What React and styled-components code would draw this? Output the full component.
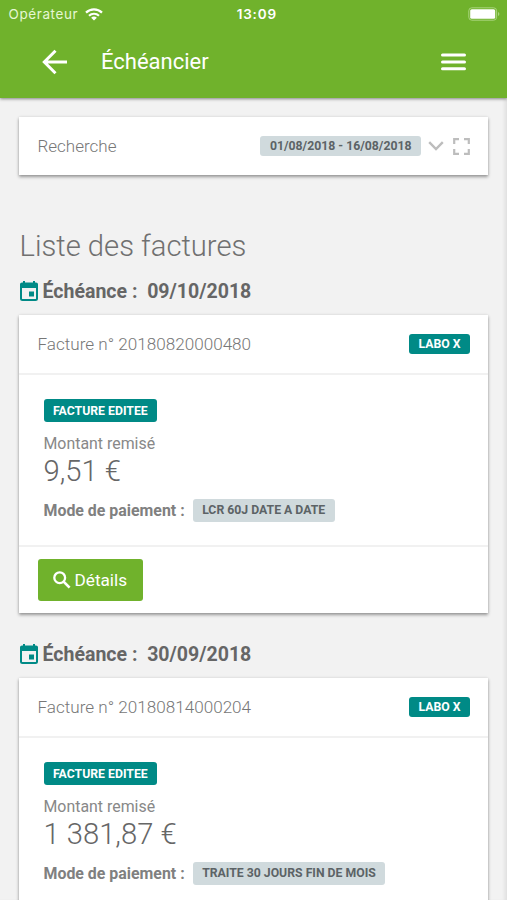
// App.jsx
import React from "react";
import styled, { createGlobalStyle } from "styled-components";

const GlobalStyle = createGlobalStyle`
  * {
    box-sizing: border-box;
  }

  body {
    margin: 0;
    background-color: #f2f2f2;
    font-family: Roboto, "Liberation Sans", sans-serif;
    color: #666;
  }
`;

const Screen = styled.div`
  height: 900px;
  overflow: hidden;
  display: flex;
  flex-direction: column;
  background-color: #f2f2f2;
`;

const Header = styled.header`
  height: 98px;
  flex-shrink: 0;
  z-index: 1;
  background-color: #70b22c;
  color: #fff;
  box-shadow: 0 1px 3px rgba(0, 0, 0, 0.45);
`;

const StatusBar = styled.div`
  height: 28px;
  padding: 0 7px 0 8.5px;
  display: grid;
  grid-template-columns: 1fr auto 1fr;
  align-items: center;
  font-family: Inter, sans-serif;
  font-size: 13.5px;
  line-height: 28px;
`;

const Carrier = styled.div`
  display: flex;
  align-items: center;
  gap: 7px;
  color: #e6f7d4;
  letter-spacing: 0.6px;
`;

const Clock = styled.div`
  padding-left: 5px;
  font-weight: 600;
  letter-spacing: 0.8px;
`;

const Battery = styled.svg`
  justify-self: end;
`;

const NavBar = styled.div`
  height: 68px;
  padding: 0 40px 0 42px;
  display: flex;
  align-items: center;
`;

const NavTitle = styled.h1`
  flex: 1;
  margin: 0 0 0 33px;
  font-size: 22px;
  font-weight: 400;
  line-height: 30px;
`;

const Content = styled.main`
  flex: 1;
  min-height: 0;
  padding: 19px 18px 0 19px;
  display: flex;
  flex-direction: column;
  border-right: 1px solid #e2e2e2;
  box-shadow: inset -3px 0 3px -1px rgba(0, 0, 0, 0.06);
`;

const Card = styled.section`
  flex-shrink: 0;
  background-color: #fff;
  box-shadow: 0 2px 3px rgba(0, 0, 0, 0.36), 0 0 3px rgba(0, 0, 0, 0.1);
`;

const SearchCard = styled(Card)`
  height: 58px;
  padding: 0 18px 0 18.5px;
  display: flex;
  align-items: center;
`;

const SearchLabel = styled.span`
  flex: 1;
  font-size: 17px;
  font-weight: 300;
  color: #777;
`;

const Badge = styled.span`
  height: ${(props) => props.$height || 23}px;
  padding: 0 9.5px;
  border-radius: 3px;
  display: inline-flex;
  align-items: center;
  background-color: ${(props) => (props.$teal ? "#008a86" : "#d0dadd")};
  color: ${(props) => (props.$teal ? "#fff" : "#5c6366")};
  font-size: 12.25px;
  font-weight: 700;
  white-space: nowrap;
`;

const SearchIcons = styled.div`
  margin-left: 7px;
  display: flex;
  align-items: center;
  gap: 9px;
`;

const ListTitle = styled.h2`
  margin: 51px 0 0 0.5px;
  font-size: 29.2px;
  font-weight: 300;
  line-height: 40px;
  color: #707070;
`;

const DueDate = styled.h3`
  height: 24px;
  flex-shrink: 0;
  margin: ${(props) => (props.$first ? 14 : 30)}px 0 11px;
  display: flex;
  align-items: center;
  font-size: 19.55px;
  font-weight: 700;
  line-height: 24px;
  white-space: pre;

  svg {
    margin: -2px 5px 0 0.5px;
  }
`;

const CardHeader = styled.div`
  height: 60px;
  padding: 0 18px 0 18.5px;
  border-bottom: 2px solid #f1f1f1;
  display: flex;
  align-items: center;
  justify-content: space-between;
  font-size: 17.1px;
  font-weight: 300;
  color: #777;
`;

const CardBody = styled.div`
  height: 170px;
  padding: 24px 24px 0 24.5px;
`;

const AmountLabel = styled.div`
  margin-top: 12px;
  font-size: 15.9px;
  line-height: 20px;
  color: #888;
`;

const Amount = styled.div`
  font-size: 29.2px;
  font-weight: 300;
  line-height: 34px;
  color: #666;
`;

const Payment = styled.div`
  height: 24px;
  margin-top: 10px;
  display: flex;
  align-items: center;
  gap: 8px;
  font-size: 15.9px;
  font-weight: 700;
  color: #808080;
`;

const CardFooter = styled.div`
  height: 68px;
  padding: 12px 18px 0 18.5px;
  border-top: 2px solid #f1f1f1;
`;

const DetailsButton = styled.button`
  width: 105px;
  height: 42px;
  padding: 0 0 1px 15px;
  border: none;
  border-radius: 3px;
  display: flex;
  align-items: center;
  gap: 4px;
  background-color: #70b22c;
  color: #fff;
  font-family: inherit;
  font-size: 17.2px;
`;

const invoices = [
  {
    due: "09/10/2018",
    number: "20180820000480",
    amount: "9,51 €",
    payment: "LCR 60J DATE A DATE",
    hasDetails: true,
  },
  {
    due: "30/09/2018",
    number: "20180814000204",
    amount: "1 381,87 €",
    payment: "TRAITE 30 JOURS FIN DE MOIS",
    hasDetails: false,
  },
];

const WifiIcon = () => (
  <svg width="18" height="13" viewBox="0 0 18 13" fill="none" stroke="#fff">
    <path d="M1 4.6a11.5 11.5 0 0 1 16 0" strokeWidth="2.2" />
    <path d="M4 7.8a7.2 7.2 0 0 1 10 0" strokeWidth="2.1" />
    <path d="M9 12.6L6.1 9.8a4.2 4.2 0 0 1 5.8 0z" fill="#fff" stroke="none" />
  </svg>
);

const BatteryIcon = () => (
  <Battery width="32" height="14" viewBox="0 0 32 14">
    <rect x="0.8" y="0.8" width="27.8" height="12.4" rx="3" fill="none" stroke="#a9d47d" />
    <rect x="2.2" y="2.2" width="25" height="9.6" rx="1.6" fill="#fff" />
    <path d="M30 5v4q1.4-.6 1.4-2T30 5z" fill="#a9d47d" />
  </Battery>
);

const BackIcon = () => (
  <svg width="26" height="26" viewBox="0 0 26 26" fill="none" stroke="#fff" strokeWidth="3">
    <path d="M25 13H3M13.5 1.8L2.3 13l11.2 11.2" />
  </svg>
);

const MenuIcon = () => (
  <svg width="27" height="20" viewBox="0 0 27 20" stroke="#fff" strokeWidth="3" strokeLinecap="round">
    <path d="M2.5 3h22M2.5 9.9h22M2.5 16.8h22" />
  </svg>
);

const ChevronIcon = () => (
  <svg width="16" height="10" viewBox="0 0 16 10" fill="none" stroke="#bdbdbd" strokeWidth="2.4">
    <path d="M1.2 1.2L8 8l6.8-6.8" />
  </svg>
);

const ExpandIcon = () => (
  <svg width="17" height="17" viewBox="0 0 17 17" fill="none" stroke="#bdbdbd" strokeWidth="2.2">
    <path d="M1.2 6V1.2H6M11 1.2h4.8V6M15.8 11v4.8H11M6 15.8H1.2V11" />
  </svg>
);

const CalendarIcon = () => (
  <svg width="18" height="20" viewBox="0 0 18 20" fill="#008a86">
    <path d="M3 0h2v2H3zM13 0h2v2h-2zM2 1.6h14a2 2 0 0 1 2 2V7H0V3.6a2 2 0 0 1 2-2zM9 10.6h5v5H9z" />
    <rect x="1" y="3" width="16" height="16" rx="1.5" fill="none" stroke="#008a86" strokeWidth="2" />
  </svg>
);

const SearchIcon = () => (
  <svg width="18" height="18" viewBox="0 0 18 18" fill="none" stroke="#fff" strokeWidth="2.3">
    <circle cx="6.7" cy="6.7" r="5.4" />
    <path d="M10.6 10.6l6 6" strokeWidth="2.7" />
  </svg>
);

const App = () => {
  return (
    <Screen>
      <GlobalStyle />
      <Header>
        <StatusBar>
          <Carrier>
            Opérateur
            <WifiIcon />
          </Carrier>
          <Clock>13:09</Clock>
          <BatteryIcon />
        </StatusBar>
        <NavBar>
          <BackIcon />
          <NavTitle>Échéancier</NavTitle>
          <MenuIcon />
        </NavBar>
      </Header>
      <Content>
        <SearchCard>
          <SearchLabel>Recherche</SearchLabel>
          <Badge $height={20}>01/08/2018 - 16/08/2018</Badge>
          <SearchIcons>
            <ChevronIcon />
            <ExpandIcon />
          </SearchIcons>
        </SearchCard>

        <ListTitle>Liste des factures</ListTitle>
        {invoices.map((invoice, index) => (
          <React.Fragment key={invoice.number}>
            <DueDate $first={index === 0}>
              <CalendarIcon />
              {"Échéance :  "}
              {invoice.due}
            </DueDate>
            <Card>
              <CardHeader>
                <span>Facture n° {invoice.number}</span>
                <Badge $teal $height={20}>LABO X</Badge>
              </CardHeader>
              <CardBody>
                <Badge $teal>FACTURE EDITEE</Badge>
                <AmountLabel>Montant remisé</AmountLabel>
                <Amount>{invoice.amount}</Amount>
                <Payment>
                  Mode de paiement :
                  <Badge>{invoice.payment}</Badge>
                </Payment>
              </CardBody>
              {invoice.hasDetails && (
                <CardFooter>
                  <DetailsButton>
                    <SearchIcon />
                    Détails
                  </DetailsButton>
                </CardFooter>
              )}
            </Card>
          </React.Fragment>
        ))}
      </Content>
    </Screen>
  );
};

export default App;
